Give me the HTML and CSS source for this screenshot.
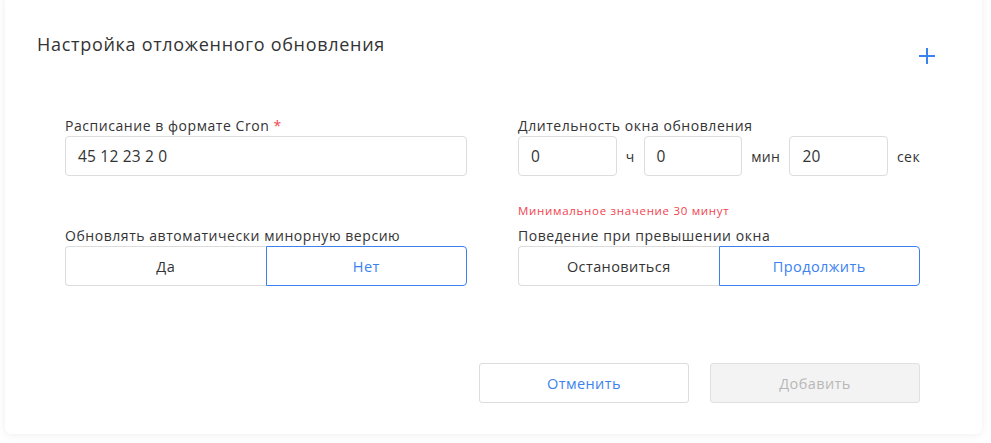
FILE: index.html
```html
<!DOCTYPE html>
<html lang="ru">
<head>
<meta charset="utf-8">
<link rel="stylesheet" href="styles.css">
</head>
<body>
<div class="card">
  <div class="head">
    <h2 class="title">Настройка отложенного обновления</h2>
    <button class="add" aria-label="Добавить">
      <svg width="18" height="18" viewBox="0 0 18 18"><path d="M9 1v16M1 9h16" stroke="#3b82f0" stroke-width="2" fill="none"/></svg>
    </button>
  </div>
  <div class="grid">
    <div class="field">
      <div class="label">Расписание в формате Cron <span class="req">*</span></div>
      <div class="input wide">45 12 23 2 0</div>
    </div>
    <div class="field">
      <div class="label">Длительность окна обновления</div>
      <div class="duration">
        <div class="input small">0</div><span class="unit">ч</span>
        <div class="input small">0</div><span class="unit">мин</span>
        <div class="input small">20</div><span class="unit">сек</span>
      </div>
      <div class="error">Минимальное значение 30 минут</div>
    </div>
    <div class="field">
      <div class="label">Обновлять автоматически минорную версию</div>
      <div class="toggle">
        <div class="opt">Да</div>
        <div class="opt active">Нет</div>
      </div>
    </div>
    <div class="field">
      <div class="label">Поведение при превышении окна</div>
      <div class="toggle">
        <div class="opt">Остановиться</div>
        <div class="opt active">Продолжить</div>
      </div>
    </div>
  </div>
  <div class="actions">
    <button class="btn cancel">Отменить</button>
    <button class="btn disabled">Добавить</button>
  </div>
</div>
</body>
</html>
```
FILE: styles.css
```css
* { box-sizing: border-box; }
html, body { margin: 0; padding: 0; background: #ffffff; }
body {
  font-family: "Open Sans", "Noto Sans", sans-serif;
  color: #333333;
  width: 991px;
  height: 443px;
  overflow: hidden;
}
.card {
  margin: -8px 9px 0 5px;
  padding: 40px 62px 30px 60px;
  background: #ffffff;
  border-radius: 6px;
  box-shadow: 0 1px 8px rgba(0, 0, 0, 0.07);
  height: 442px;
}
.head {
  display: flex;
  justify-content: space-between;
  align-items: flex-start;
  margin-left: -28px;
  margin-right: -16px;
}
.title {
  margin: 0;
  font-size: 18px;
  font-weight: 500;
  line-height: 24px;
  color: #333333;
  letter-spacing: 0.7px;
}
.add {
  margin-top: 15px;
  border: 0;
  background: none;
  padding: 0;
  width: 18px;
  height: 18px;
  display: flex;
}
.grid {
  margin-top: 52px;
  display: grid;
  grid-template-columns: 402px 402px;
  column-gap: 51px;
  row-gap: 9px;
  align-items: start;
}
.label {
  font-size: 14px;
  line-height: 17px;
  color: #333333;
  margin-bottom: 2px;
  white-space: nowrap;
  letter-spacing: 0.55px;
}
.req { color: #f0444f; }
.input {
  height: 40px;
  border: 1px solid #dcdcdc;
  border-radius: 4px;
  font-size: 15.5px;
  line-height: 38px;
  padding-left: 12px;
  color: #333333;
  letter-spacing: 0.2px;
}
.input.small { width: 100px; }
.duration {
  display: flex;
  align-items: center;
  gap: 9px;
}
.unit { font-size: 14px; color: #333333; letter-spacing: 0.4px; }
.error {
  margin-top: 28px;
  font-size: 11.5px;
  line-height: 14px;
  color: #f0444f;
  letter-spacing: 0.7px;
}
.toggle {
  display: flex;
  height: 40px;
}
.opt {
  flex: 1;
  display: flex;
  align-items: center;
  justify-content: center;
  font-size: 14.5px;
  letter-spacing: 0.4px;
  color: #333333;
  border: 1px solid #dcdcdc;
  border-radius: 4px 0 0 4px;
  border-right: 0;
}
.opt.active {
  border: 1px solid #3b82f0;
  border-radius: 0 4px 4px 0;
  color: #3b82f0;
}
.actions {
  display: flex;
  justify-content: flex-end;
  gap: 21px;
  margin-top: 77px;
}
.btn {
  width: 210px;
  height: 40px;
  font-family: inherit;
  font-size: 14.5px;
  letter-spacing: 0.4px;
  border-radius: 3px;
  background: #ffffff;
  border: 1px solid #dcdcdc;
}
.btn.cancel { color: #3b82f0; }
.btn.disabled { background: #f3f3f3; color: #b8b8b8; border-color: #e0e0e0; }
```
